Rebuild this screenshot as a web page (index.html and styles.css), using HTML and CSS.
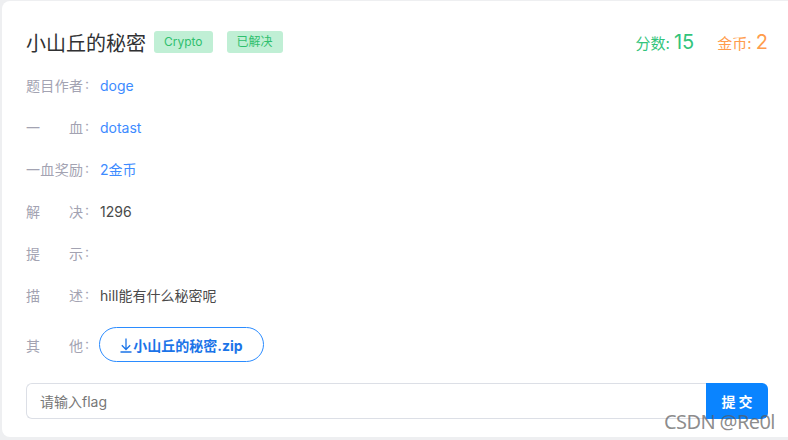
FILE: index.html
```html
<!DOCTYPE html>
<html lang="zh">
<head>
<meta charset="utf-8">
<link rel="stylesheet" href="styles.css">
</head>
<body>
<div class="card">
  <div class="head">
    <div class="title-wrap">
      <span class="title">小山丘的秘密</span>
      <span class="tag">Crypto</span>
      <span class="tag tag-solved">已解决</span>
    </div>
    <div class="stats">
      <span class="stat score">分数: <b>15</b></span>
      <span class="stat coin">金币: <b>2</b></span>
    </div>
  </div>
  <div class="rows">
    <div class="row"><span class="label"><span class="lt">题目作者</span>:</span><span class="val link">doge</span></div>
    <div class="row"><span class="label"><span class="lt">一血</span>:</span><span class="val link">dotast</span></div>
    <div class="row"><span class="label"><span class="lt">一血奖励</span>:</span><span class="val link">2金币</span></div>
    <div class="row"><span class="label"><span class="lt">解决</span>:</span><span class="val">1296</span></div>
    <div class="row"><span class="label"><span class="lt">提示</span>:</span><span class="val"></span></div>
    <div class="row"><span class="label"><span class="lt">描述</span>:</span><span class="val">hill能有什么秘密呢</span></div>
    <div class="row row-btn"><span class="label"><span class="lt">其他</span>:</span><a class="dl"><svg class="dl-icon" width="12" height="16" viewBox="0 0 12 16"><path d="M6 1.5V12.5M1.8 8.3L6 12.5L10.2 8.3M0.5 15H11.5" fill="none" stroke="currentColor" stroke-width="1.3"/></svg>小山丘的秘密.zip</a></div>
  </div>
  <div class="submit">
    <div class="input">请输入flag</div>
    <div class="btn">提交</div>
  </div>
  <div class="watermark">CSDN @Re0l</div>
</div>
</body>
</html>
```
FILE: styles.css
```css
html, body {
  margin: 0;
  padding: 0;
  background: #eeeff1;
  font-family: "Inter", "Noto Sans CJK SC", sans-serif;
}
body {
  width: 788px;
  height: 440px;
  overflow: hidden;
}
.card {
  position: relative;
  margin: 1px 0 0 2px;
  height: 436px;
  box-sizing: border-box;
  background: #fff;
  border-radius: 8px 0 0 8px;
  padding: 27px 20px 0 24px;
}
.head {
  display: flex;
  justify-content: space-between;
  align-items: center;
  height: 28px;
}
.title-wrap {
  display: flex;
  align-items: center;
}
.title {
  font-size: 20px;
  color: #303133;
  margin-right: 8px;
}
.tag {
  height: 22px;
  line-height: 22px;
  padding: 0 10px;
  font-size: 12px;
  color: #2fbf6e;
  background: #c0efd5;
  border-radius: 3px;
  margin-right: 14px;
}
.stats {
  display: flex;
  align-items: baseline;
  gap: 23px;
}
.stat {
  font-size: 15px;
}
.stat b {
  font-weight: 400;
  font-size: 20px;
}
.score { color: #33c47b; }
.coin { color: #ff9c4c; }
.rows {
  margin-top: 19px;
  display: flex;
  flex-direction: column;
  gap: 22px;
}
.row {
  display: flex;
  align-items: center;
  height: 20px;
  font-size: 14px;
}
.row-btn {
  height: 35px;
}
.label {
  color: #a3a3b2;
  width: 74px;
  flex: none;
  display: flex;
}
.lt {
  width: 57px;
  text-align: justify;
  text-align-last: justify;
  margin-right: 2px;
}
.val {
  color: #4a4a4a;
}
.link {
  color: #3d8bff;
}
.dl {
  box-sizing: border-box;
  width: 165px;
  height: 35px;
  border: 1px solid #2b8cff;
  border-radius: 18px;
  color: #1b74e8;
  font-weight: 700;
  display: flex;
  align-items: center;
  justify-content: center;
  margin-left: -1px;
}
.dl-icon {
  margin-right: 1px;
  margin-top: 1px;
}
.submit {
  margin-top: 21px;
  display: flex;
  height: 36px;
}
.input {
  flex: 1;
  box-sizing: border-box;
  border: 1px solid #dcdfe6;
  border-right: none;
  border-radius: 6px 0 0 6px;
  padding-left: 13px;
  font-size: 14px;
  color: #777;
  display: flex;
  align-items: center;
}
.btn {
  width: 62px;
  background: #0a84ff;
  color: #fff;
  font-weight: 700;
  font-size: 14px;
  letter-spacing: 3px;
  padding-left: 3px;
  box-sizing: border-box;
  display: flex;
  align-items: center;
  justify-content: center;
  border-radius: 0 6px 6px 0;
}
.watermark {
  position: absolute;
  left: 662px;
  top: 410px;
  font-family: "Noto Sans", sans-serif;
  font-size: 20px;
  line-height: 21px;
  letter-spacing: -0.6px;
  color: rgba(90, 90, 90, 0.7);
}
```
